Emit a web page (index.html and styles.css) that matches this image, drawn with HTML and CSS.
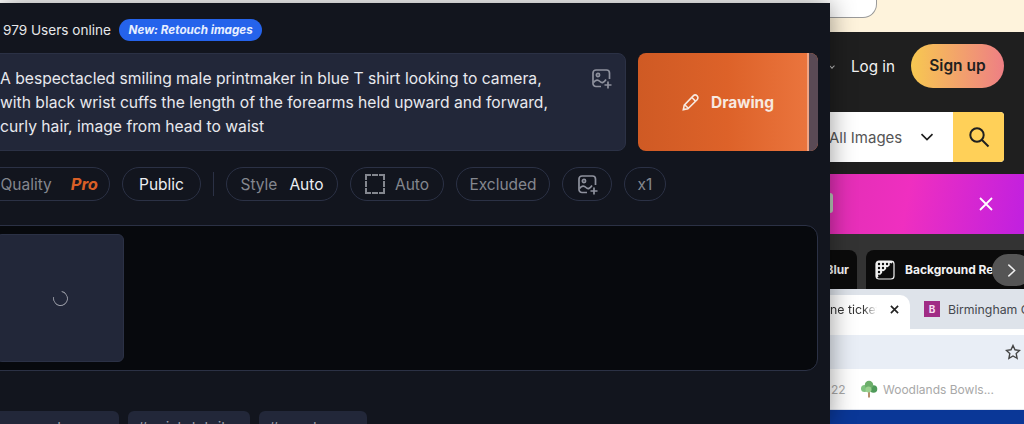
FILE: index.html
```html
<!DOCTYPE html>
<html lang="en">
<head>
    <meta charset="UTF-8">
    <title>Image generator</title>
    <link rel="stylesheet" href="styles.css">
</head>
<body>
    <!-- Generator panel -->
    <main class="panel">
        <div class="status-row">
            <span class="users">979 Users online</span>
            <span class="badge">New: Retouch images</span>
        </div>

        <div class="prompt-row">
            <div class="prompt">
                <p class="prompt-text">A bespectacled smiling male printmaker in blue T shirt looking to camera, with black wrist cuffs the length of the forearms held upward and forward, curly hair, image from head to waist</p>
                <svg class="icon-image" viewBox="0 0 20 20"><path d="M9 17.500H4a3 3 0 0 1-3-3V4a3 3 0 0 1 3-3h10.500a3 3 0 0 1 3 3v6"/><circle cx="6" cy="6" r="1.600"/><path d="M1.500 13.500C4 10.500 6 10.500 8 12.500s4 1 6-2"/><path d="M16 12.500v7M12.500 16h7"/></svg>
            </div>
            <button class="btn-draw">
                <svg class="icon-pencil" viewBox="0 0 20 20"><path d="M1.500 18.500l1-5L12.500 3.200a3 3 0 0 1 4.300 4.300L6.500 17.500z"/><path d="M11 5l4 4M3 13l4 4"/></svg>
                Drawing
            </button>
        </div>

        <div class="chip-row">
            <span class="chip chip-quality"><span class="muted">Quality</span><em class="pro">Pro</em></span>
            <span class="chip chip-public">Public</span>
            <span class="divider"></span>
            <span class="chip chip-style"><span class="muted">Style</span><span>Auto</span></span>
            <span class="chip chip-ratio muted"><span class="dashed"></span>Auto</span>
            <span class="chip chip-excluded muted">Excluded</span>
            <span class="chip chip-upload">
                <svg class="icon-image" viewBox="0 0 20 20"><path d="M9 17.500H4a3 3 0 0 1-3-3V4a3 3 0 0 1 3-3h10.500a3 3 0 0 1 3 3v6"/><circle cx="6" cy="6" r="1.600"/><path d="M1.500 13.500C4 10.500 6 10.500 8 12.500s4 1 6-2"/><path d="M16 12.500v7M12.500 16h7"/></svg>
            </span>
            <span class="chip chip-count muted">x1</span>
        </div>

        <div class="results">
            <div class="thumb"><span class="spinner"></span></div>
        </div>

        <div class="tag-row">
            <span class="tag tag-a">#men and women</span>
            <span class="tag tag-b">#wrist detail</span>
            <span class="tag tag-c">#eyeglasses</span>
        </div>
    </main>

    <!-- Page behind the panel -->
    <aside class="site">
        <div class="promo"><span class="promo-tab"></span></div>

        <div class="site-head">
            <div class="auth">
                <span class="caret-small"></span>
                <span class="login">Log in</span>
                <span class="signup">Sign up</span>
            </div>
            <div class="search">
                <span class="search-type">All Images</span>
                <svg class="icon-caret" viewBox="0 0 14 8"><path d="M1.500 1.200L7 6.500l5.500-5.300"/></svg>
                <span class="search-btn">
                    <svg class="icon-search" viewBox="0 0 22 22"><circle cx="9" cy="9" r="6.700"/><path d="M14 14l6.500 6.500"/></svg>
                </span>
            </div>
        </div>

        <div class="banner">
            <span class="banner-dot"></span>
            <svg class="icon-close" viewBox="0 0 14 14"><path d="M1 1l12 12M13 1L1 13"/></svg>
        </div>

        <div class="tools">
            <span class="tool tool-blur">Blur</span>
            <span class="tool tool-bg">
                <svg class="icon-bg" viewBox="0 0 20 20">
                    <rect x="1" y="1" width="18" height="18" rx="3"/>
                    <path class="icon-bg-half" d="M1 19V4a3 3 0 0 1 3-3h15z"/>
                    <g class="icon-bg-dots">
                        <circle cx="4" cy="4" r="1.200"/><circle cx="8" cy="4" r="1.200"/><circle cx="12" cy="4" r="1.200"/><circle cx="15.500" cy="4" r="1"/>
                        <circle cx="4" cy="8" r="1.200"/><circle cx="8" cy="8" r="1.200"/><circle cx="12" cy="8" r="1"/>
                        <circle cx="4" cy="12" r="1.200"/><circle cx="8" cy="12" r="1"/>
                        <circle cx="4" cy="15.500" r="1"/>
                    </g>
                </svg>
                Background Remover
            </span>
            <span class="tools-next">
                <svg class="icon-next" viewBox="0 0 10 16"><path d="M1.500 1.500L8.500 8l-7 6.500"/></svg>
            </span>
        </div>

        <div class="tabs">
            <span class="tab tab-active">
                <span class="tab-title">ne ticket</span>
                <svg class="icon-tab-close" viewBox="0 0 10 10"><path d="M1 1l8 8M9 1L1 9"/></svg>
            </span>
            <span class="tab tab-idle"><span class="favicon">B</span>Birmingham City</span>
        </div>

        <div class="toolbar">
            <svg class="icon-star" viewBox="0 0 16 16"><path d="M8 1.500l2 4.300 4.600.6-3.400 3.200.9 4.700L8 12l-4.100 2.300.9-4.700L1.400 6.400 6 5.800z"/></svg>
        </div>

        <div class="bookmarks">
            <span class="mark-num">22</span>
            <svg class="icon-tree" viewBox="0 0 18 18">
                <rect x="8" y="10" width="2" height="7.500" fill="#b58f6c"/>
                <circle cx="4.500" cy="8.500" r="3.500" fill="#7fc27f"/>
                <circle cx="13.500" cy="9" r="3.800" fill="#4f9a5a"/>
                <circle cx="9" cy="5" r="4.200" fill="#6cae6a"/>
                <circle cx="8.500" cy="9.500" r="3" fill="#9ad08e"/>
            </svg>
            <span class="mark-name">Woodlands Bowls...</span>
        </div>

        <div class="footer-band"></div>
    </aside>
</body>
</html>
```

FILE: styles.css
```css
* {
    box-sizing: border-box;
}

body {
    margin: 0;
    height: 424px;
    display: flex;
    overflow: hidden;
    background-color: #fff;
    font-family: Inter, "Noto Sans", sans-serif;
}

/* Generator panel */
.panel {
    position: relative;
    z-index: 1;
    flex: 0 0 830px;
    height: 421px;
    margin-top: 3px;
    padding: 0 12px 0 0;
    overflow: hidden;
    background-color: #12151e;
    box-shadow: 0 0 24px rgba(0, 0, 0, 0.42);
}

.status-row {
    display: flex;
    align-items: center;
    height: 22px;
    margin-top: 16px;
    padding-left: 3px;
    gap: 8px;
}

.users {
    color: #e6e7ea;
    font-size: 13.600px;
}

.badge {
    padding: 0 9.500px;
    line-height: 22px;
    border-radius: 11px;
    background-color: #2563eb;
    color: #e8efff;
    font-size: 11.700px;
    font-weight: 700;
    font-style: italic;
}

.prompt-row {
    display: flex;
    gap: 12px;
    height: 98px;
    margin-top: 12px;
}

.prompt {
    flex: 1;
    display: flex;
    justify-content: space-between;
    margin-left: -20px;
    padding: 13px 13px 0 19px;
    border: 1px solid #2b3145;
    border-radius: 8px;
    background-color: #222739;
}

.prompt-text {
    margin: 0;
    width: 560px;
    color: #e8e9ee;
    font-size: 15.650px;
    line-height: 24px;
}

.icon-image {
    flex: none;
    width: 20px;
    height: 20px;
    margin-top: 2px;
    fill: none;
    stroke: #8e919d;
    stroke-width: 1.700;
}

.btn-draw {
    position: relative;
    flex: 0 0 180px;
    display: flex;
    align-items: center;
    justify-content: center;
    gap: 11px;
    padding: 0;
    border: none;
    border-radius: 8px;
    overflow: hidden;
    background: linear-gradient(90deg, #cf5a24, #dd6229 50%, #ec7740);
    color: #f7e9e0;
    font-family: inherit;
    font-size: 15.500px;
    font-weight: 700;
}

/* Stripe sitting over the right end of the button */
.btn-draw::after {
    content: "";
    position: absolute;
    top: 0;
    right: 0;
    bottom: 0;
    width: 9px;
    border-left: 2px solid #f0a585;
    background-color: #5a4a55;
}

.icon-pencil {
    width: 18px;
    height: 18px;
    fill: none;
    stroke: #f7e9e0;
    stroke-width: 1.800;
}

.chip-row {
    display: flex;
    align-items: center;
    gap: 12px;
    height: 34px;
    margin-top: 16px;
}

.chip {
    display: flex;
    align-items: center;
    justify-content: center;
    height: 34px;
    border: 1px solid #2b3145;
    border-radius: 17px;
    color: #eceef2;
    font-size: 15.500px;
}

.muted {
    color: #84878f;
}

.chip-quality {
    width: 130px;
    margin-left: -20px;
    justify-content: flex-end;
    padding-right: 11px;
    gap: 19px;
}

.pro {
    color: #d95f26;
    font-size: 16.500px;
    font-weight: 700;
}

.chip-public {
    width: 79px;
}

.divider {
    width: 1px;
    height: 24px;
    background-color: #2b3145;
}

.chip-style {
    width: 112px;
    gap: 12px;
}

.chip-ratio {
    width: 94px;
    gap: 10px;
}

.dashed {
    width: 20px;
    height: 20px;
    border: 2px dashed #84878f;
}

.chip-excluded {
    width: 94px;
}

.chip-upload {
    width: 50px;
}

.chip-upload .icon-image {
    margin: 2px 0 0 2px;
}

.chip-count {
    width: 42px;
}

.results {
    display: flex;
    align-items: center;
    height: 146px;
    margin: 24px 0 0 -20px;
    padding-left: 15px;
    border: 1px solid #2b3145;
    border-radius: 12px;
    background-color: #07090d;
}

.thumb {
    display: flex;
    align-items: center;
    justify-content: center;
    width: 128px;
    height: 128px;
    border: 1px solid #2b3145;
    border-radius: 6px;
    background-color: #222739;
}

.spinner {
    width: 15px;
    height: 15px;
    border: 1.500px solid #9a9ca6;
    border-top-color: transparent;
    border-radius: 50%;
    transform: rotate(-35deg);
}

.tag-row {
    display: flex;
    gap: 9px;
    margin: 40px 0 0 -20px;
}

.tag {
    height: 30px;
    padding: 7px 10px;
    border-radius: 6px;
    background-color: #222739;
    color: #9a9ca6;
    font-size: 15px;
    white-space: nowrap;
    overflow: hidden;
}

.tag-a {
    width: 139px;
}

.tag-b {
    width: 122px;
}

.tag-c {
    width: 108px;
}

/* Page behind the panel */
.site {
    flex: 1;
    min-width: 0;
    display: flex;
    flex-direction: column;
    overflow: hidden;
}

.promo {
    height: 32px;
    flex: none;
    background-color: #fef3dc;
}

.promo-tab {
    display: block;
    width: 47px;
    height: 18px;
    border: 1px solid #9a9a9a;
    border-top: none;
    border-left: none;
    border-radius: 0 0 14px 0;
    background-color: #fff;
}

.site-head {
    flex: none;
    height: 142px;
    padding: 12px 20px 0 0;
    background-color: #1f1f1f;
}

.auth {
    display: flex;
    align-items: center;
    height: 44px;
}

.caret-small {
    width: 4px;
    height: 4px;
    margin-right: 17px;
    border-right: 1px solid #bbb;
    border-bottom: 1px solid #bbb;
    transform: rotate(45deg);
}

.login {
    margin-right: 16px;
    color: #f2f2f2;
    font-size: 15.200px;
}

.signup {
    flex: 1;
    line-height: 44px;
    border-radius: 22px;
    background: linear-gradient(90deg, #f7c851, #ee7f84);
    color: #1f1f1f;
    font-size: 15.500px;
    font-weight: 600;
    text-align: center;
}

.search {
    display: flex;
    align-items: center;
    height: 50px;
    margin-top: 24px;
    border-radius: 0 4px 4px 0;
    overflow: hidden;
    background-color: #fff;
}

.search-type {
    flex: 1;
    margin-left: -1px;
    color: #555;
    font-size: 15px;
}

.icon-caret {
    width: 14px;
    height: 8px;
    margin-right: 19px;
    fill: none;
    stroke: #1f1f1f;
    stroke-width: 1.700;
}

.search-btn {
    display: flex;
    align-items: center;
    justify-content: center;
    width: 51px;
    height: 50px;
    background-color: #ffd058;
}

.icon-search {
    width: 22px;
    height: 22px;
    fill: none;
    stroke: #1f1f1f;
    stroke-width: 2;
}

.banner {
    flex: none;
    display: flex;
    align-items: center;
    justify-content: space-between;
    height: 60px;
    padding-right: 31px;
    background: linear-gradient(100deg, #e22fb5, #ef2fc0 40%, #c020e0);
}

.banner-dot {
    width: 3px;
    height: 20px;
    margin-top: -2px;
    border-radius: 0 10px 10px 0;
    background-color: #b9c9b9;
}

.icon-close {
    width: 14px;
    height: 14px;
    fill: none;
    stroke: #fff;
    stroke-width: 1.800;
}

.tools {
    position: relative;
    flex: none;
    display: flex;
    gap: 9px;
    height: 55px;
    padding-top: 16px;
    overflow: hidden;
    background-color: #333;
}

.tool {
    display: flex;
    align-items: center;
    flex: none;
    height: 39px;
    background-color: #0b0b0b;
    color: #f2f2f2;
    font-size: 12px;
    font-weight: 700;
    white-space: nowrap;
}

.tool-blur {
    width: 27px;
    padding-right: 8px;
    justify-content: flex-end;
    overflow: hidden;
    border-radius: 0 8px 0 0;
}

.tool-bg {
    gap: 10px;
    padding: 0 12px 0 9px;
    border-radius: 8px 8px 0 0;
}

.icon-bg {
    flex: none;
    width: 20px;
    height: 20px;
    fill: #0b0b0b;
    stroke: #f2f2f2;
    stroke-width: 1.200;
}

.icon-bg-half {
    fill: #f2f2f2;
    stroke: none;
}

.icon-bg-dots {
    fill: #0b0b0b;
    stroke: none;
}

/* Round arrow lying over the tool list */
.tools-next {
    position: absolute;
    top: 20px;
    left: 162px;
    display: flex;
    align-items: center;
    justify-content: center;
    width: 40px;
    height: 32px;
    padding-right: 2px;
    border-radius: 16px;
    background-color: #555;
}

.icon-next {
    width: 9px;
    height: 15px;
    fill: none;
    stroke: #f2f2f2;
    stroke-width: 1.600;
}

.tabs {
    flex: none;
    display: flex;
    align-items: flex-end;
    height: 40px;
    background-color: #dee3ea;
}

.tab {
    display: flex;
    align-items: center;
    height: 34px;
    padding-bottom: 6px;
    font-size: 12.300px;
    white-space: nowrap;
}

.tab-active {
    flex: 0 0 80px;
    justify-content: space-between;
    padding-right: 11px;
    border-radius: 0 10px 0 0;
    background-color: #fff;
    color: #333;
}

.tab-title {
    width: 47px;
    overflow: hidden;
    -webkit-mask-image: linear-gradient(90deg, #000 70%, transparent);
    mask-image: linear-gradient(90deg, #000 70%, transparent);
}

.icon-tab-close {
    width: 9px;
    height: 9px;
    fill: none;
    stroke: #222;
    stroke-width: 1.800;
}

.tab-idle {
    flex: 1;
    gap: 8px;
    padding-left: 14px;
    overflow: hidden;
    color: #45484e;
}

.favicon {
    flex: none;
    width: 16px;
    height: 16px;
    background-color: #a02c85;
    color: #f6dff0;
    font-size: 10px;
    font-weight: 700;
    line-height: 16px;
    text-align: center;
}

.toolbar {
    flex: none;
    display: flex;
    align-items: center;
    justify-content: flex-end;
    height: 40px;
    padding-right: 3px;
    border-top: 6px solid #fff;
    background-color: #e9eef6;
}

.icon-star {
    width: 16px;
    height: 16px;
    fill: none;
    stroke: #444;
    stroke-width: 1.400;
}

.bookmarks {
    flex: none;
    display: flex;
    align-items: center;
    height: 40px;
    padding-left: 1px;
    background-color: #fff;
    color: #a8a8a8;
    font-size: 12px;
}

.mark-num {
    width: 29px;
}

.icon-tree {
    width: 18px;
    height: 18px;
    margin-right: 5px;
}

.footer-band {
    flex: 1;
    border-top: 1px solid #e2e6ee;
    background-color: #0a3797;
}
```
